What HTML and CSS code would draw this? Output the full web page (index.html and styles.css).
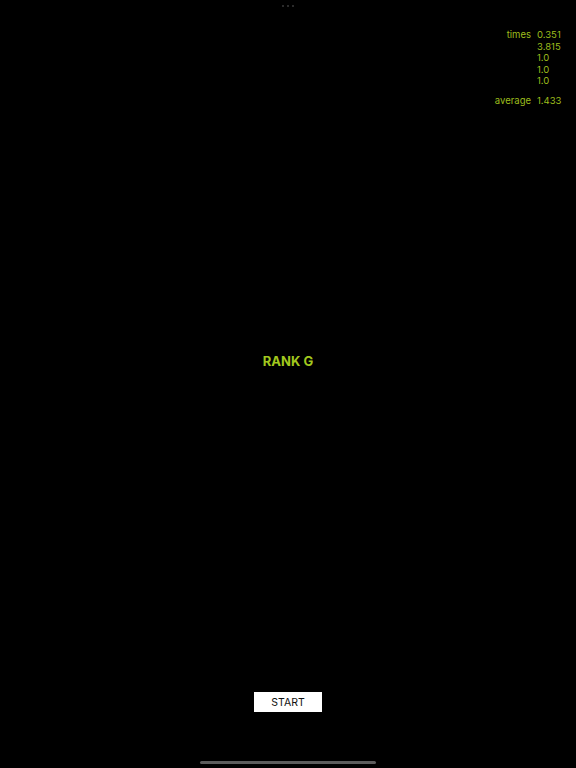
FILE: index.html
```html
<!DOCTYPE html>
<html lang="en">
<head>
<meta charset="utf-8">
<title>Rank</title>
<link rel="stylesheet" href="styles.css">
</head>
<body>
<div class="screen">
  <div class="topbar">
    <span class="dot"></span><span class="dot"></span><span class="dot"></span>
  </div>
  <div class="stats">
    <div class="stat-group">
      <span class="label">times</span>
      <div class="values">
        <span>0.351</span>
        <span>3.815</span>
        <span>1.0</span>
        <span>1.0</span>
        <span>1.0</span>
      </div>
    </div>
    <div class="stat-group average">
      <span class="label">average</span>
      <div class="values"><span>1.433</span></div>
    </div>
  </div>
  <div class="rank">RANK G</div>
  <div class="actions">
    <button class="start" type="button">START</button>
  </div>
  <div class="home-indicator"></div>
</div>
</body>
</html>
```
FILE: styles.css
```css
html, body {
  margin: 0;
  padding: 0;
  background: #000;
}

.screen {
  width: 576px;
  height: 768px;
  display: flex;
  flex-direction: column;
  font-family: Inter, "Noto Sans", "Liberation Sans", sans-serif;
  overflow: hidden;
}

.topbar {
  height: 29px;
  display: flex;
  justify-content: center;
  gap: 3px;
  padding-top: 5px;
  box-sizing: border-box;
}

.dot {
  width: 2px;
  height: 2px;
  border-radius: 50%;
  background: #3a3a3a;
}

.stats {
  align-self: flex-end;
  margin-right: 16px;
  display: flex;
  flex-direction: column;
  gap: 8.75px;
  color: #9dbd1c;
  font-size: 9.5px;
  line-height: 11.5px;
}

.stat-group {
  display: flex;
  justify-content: flex-end;
  gap: 6px;
}

.label {
  text-align: right;
}

.values {
  display: flex;
  flex-direction: column;
  width: 23px;
}

.rank {
  margin-top: 245.75px;
  text-align: center;
  color: #a2c81e;
  font-weight: 700;
  font-size: 13px;
  line-height: 17px;
}

.actions {
  margin-top: 322.5px;
  display: flex;
  justify-content: center;
}

.start {
  width: 68px;
  height: 20px;
  margin: 0;
  padding: 0;
  border: none;
  border-radius: 0;
  background: #fff;
  color: #111;
  font-family: Inter, "Noto Sans", "Liberation Sans", sans-serif;
  font-size: 10.5px;
}

.home-indicator {
  margin-top: 49px;
  align-self: center;
  width: 176px;
  height: 3px;
  border-radius: 2px;
  background: #5c5c5c;
}
```
